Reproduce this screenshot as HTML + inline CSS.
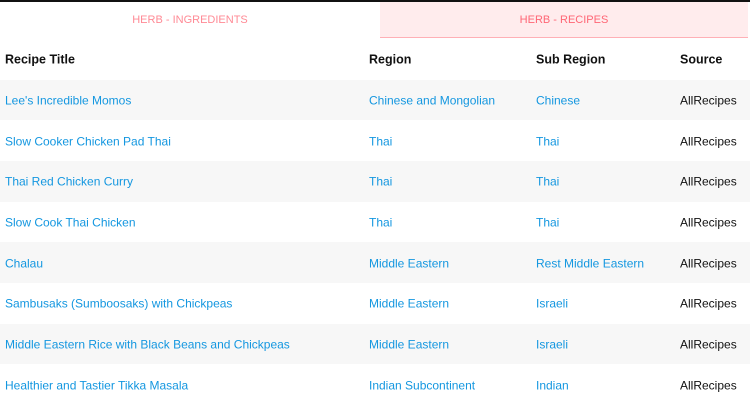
<!DOCTYPE html>
<html><head><meta charset="utf-8"><style>
*{margin:0;padding:0;box-sizing:border-box}
body{width:750px;height:404px;overflow:hidden;background:#fff;font-family:"Liberation Sans",sans-serif;font-size:12px;color:#111}
.top{position:absolute;left:0;top:0;width:750px;height:2px;background:#111}
.tab{position:absolute;top:2px;height:36px;line-height:36px;text-align:center;font-size:11px;color:#ff8a95}
.t1{left:0;width:380px}
.t2{left:380px;width:368px;background:#ffeced;border-bottom:1.5px solid #ffb0b6;color:#ff6675}
.row{position:absolute;left:0;width:750px;height:40.7px}
.row span{position:absolute;top:50%;transform:translateY(-45%);white-space:nowrap}
.g{background:#f7f7f7}
.h span{font-weight:bold;font-size:12.5px}
.b{color:#1497e0}
.c1{left:5px}.c2{left:369px}.c3{left:536px}.c4{left:680px}
</style></head><body>
<div class="top"></div>
<div class="tab t1">HERB - INGREDIENTS</div>
<div class="tab t2">HERB - RECIPES</div>
<div class="row h" style="top:39px"><span class="c1">Recipe Title</span><span class="c2">Region</span><span class="c3">Sub Region</span><span class="c4">Source</span></div>
<div class="row g" style="top:79.5px"><span class="c1 b">Lee's Incredible Momos</span><span class="c2 b">Chinese and Mongolian</span><span class="c3 b">Chinese</span><span class="c4">AllRecipes</span></div>
<div class="row" style="top:120.2px"><span class="c1 b">Slow Cooker Chicken Pad Thai</span><span class="c2 b">Thai</span><span class="c3 b">Thai</span><span class="c4">AllRecipes</span></div>
<div class="row g" style="top:160.9px"><span class="c1 b">Thai Red Chicken Curry</span><span class="c2 b">Thai</span><span class="c3 b">Thai</span><span class="c4">AllRecipes</span></div>
<div class="row" style="top:201.6px"><span class="c1 b">Slow Cook Thai Chicken</span><span class="c2 b">Thai</span><span class="c3 b">Thai</span><span class="c4">AllRecipes</span></div>
<div class="row g" style="top:242.3px"><span class="c1 b">Chalau</span><span class="c2 b">Middle Eastern</span><span class="c3 b">Rest Middle Eastern</span><span class="c4">AllRecipes</span></div>
<div class="row" style="top:283px"><span class="c1 b">Sambusaks (Sumboosaks) with Chickpeas</span><span class="c2 b">Middle Eastern</span><span class="c3 b">Israeli</span><span class="c4">AllRecipes</span></div>
<div class="row g" style="top:323.7px"><span class="c1 b">Middle Eastern Rice with Black Beans and Chickpeas</span><span class="c2 b">Middle Eastern</span><span class="c3 b">Israeli</span><span class="c4">AllRecipes</span></div>
<div class="row" style="top:364.4px"><span class="c1 b">Healthier and Tastier Tikka Masala</span><span class="c2 b">Indian Subcontinent</span><span class="c3 b">Indian</span><span class="c4">AllRecipes</span></div>
</body></html>
